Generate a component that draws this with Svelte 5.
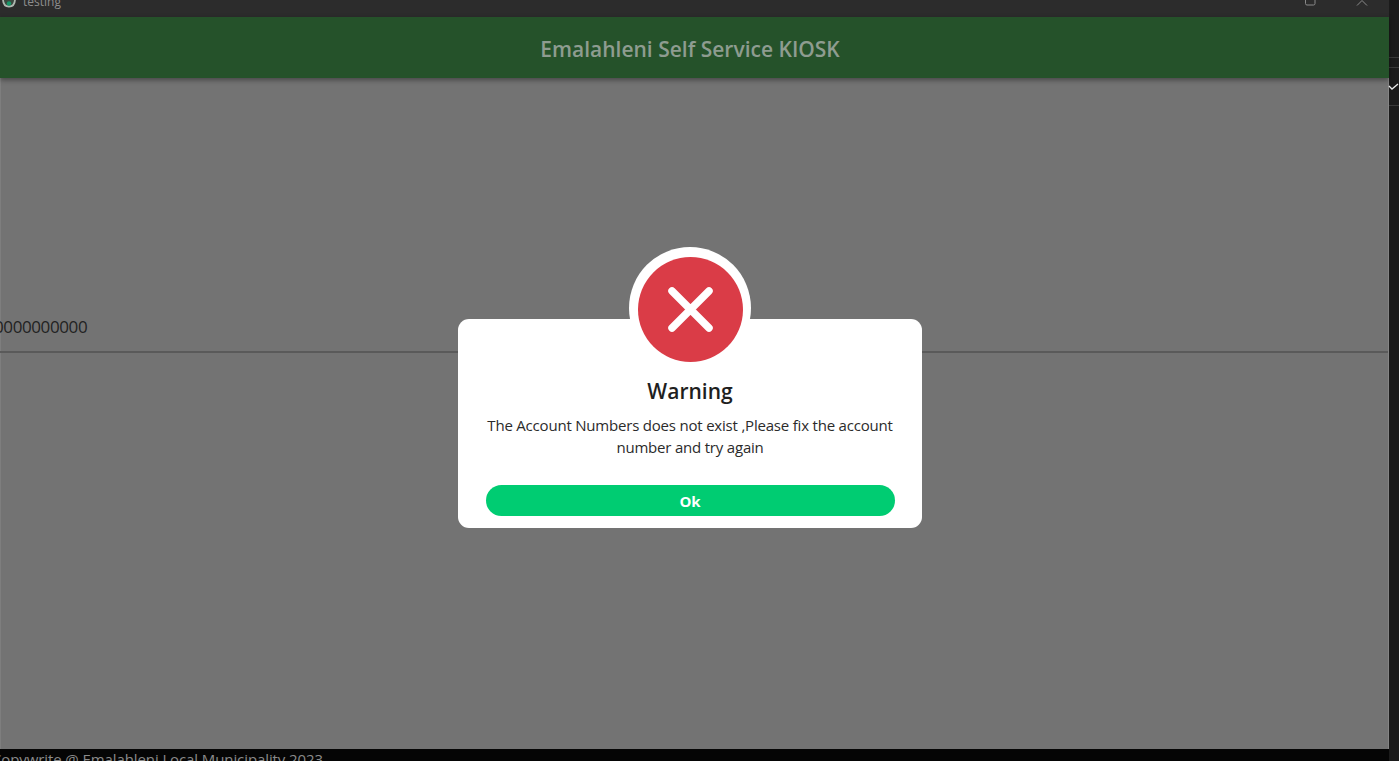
<script>
  const title = 'Emalahleni Self Service KIOSK';
  const message = 'The Account Numbers does not exist ,Please fix the account number and try again';
</script>

<div class="page">
  <div class="window">
    <div class="titlebar">
      <svg class="logo" viewBox="0 0 14 8" aria-hidden="true">
        <path d="M1-1c0 5 2.500 7.500 6 7.500S13 4 13-1" fill="#3c4a40" stroke="#aeb8b0" stroke-width="1.800" />
        <circle cx="7" cy="3.500" r="2.200" fill="#17996a" />
      </svg>
      <span class="app-name">testing</span>
      <div class="controls">
        <svg class="max" viewBox="0 0 12 6" aria-hidden="true"><rect x="1.500" y="-5" width="9.500" height="10" rx="1.500" fill="none" stroke="#8a8a8a" stroke-width="1" /></svg>
        <svg class="close" viewBox="0 0 12 6" aria-hidden="true"><path d="M6 0.500L1 5.500M6 0.500l5 5" fill="none" stroke="#8a8a8a" stroke-width="1" /></svg>
      </div>
    </div>
    <header class="header"><h1>{title}</h1></header>
    <main class="content">
      <div class="field">
        <span class="value">0000000000</span>
      </div>
    </main>
    <footer class="footer"><span>Copywrite @ Emalahleni Local Municipality 2023</span></footer>
  </div>
  <aside class="strip">
    <div class="strip-thin"></div>
    <div class="strip-row">
      <svg viewBox="0 0 11 7" aria-hidden="true"><path d="M1 3l3 3 6-5" fill="none" stroke="#e8e8e8" stroke-width="1.300" /></svg>
    </div>
  </aside>

  <div class="overlay">
    <div class="dialog" role="alertdialog">
      <div class="badge">
        <svg viewBox="0 0 105 105" aria-hidden="true">
          <circle cx="52.500" cy="52.500" r="52.500" fill="#da3c47" />
          <path d="M34 34l37 37M71 34L34 71" fill="none" stroke="#fff" stroke-width="7.500" stroke-linecap="round" />
        </svg>
      </div>
      <h2>Warning</h2>
      <p>{message}</p>
      <button type="button">Ok</button>
    </div>
  </div>
</div>

<style>
  :global(body) {
    margin: 0;
    background: #1b1b1b;
    font-family: "Open Sans", "Noto Sans", sans-serif;
  }
  .page {
    position: relative;
    display: flex;
    height: 761px;
    overflow: hidden;
  }
  .window {
    flex: 1;
    display: flex;
    flex-direction: column;
    min-width: 0;
  }
  .titlebar {
    height: 17px;
    flex: none;
    display: flex;
    align-items: flex-start;
    gap: 6px;
    padding-left: 2px;
    background: #2c2c2c;
    overflow: hidden;
  }
  .logo {
    width: 14px;
    height: 8px;
    flex: none;
  }
  .app-name {
    color: #8e8e8e;
    font-size: 12px;
    line-height: 12px;
    margin-top: -4px;
    margin-left: 1px;
  }
  .controls {
    margin-left: auto;
    display: flex;
    gap: 40px;
    padding-right: 21px;
  }
  .controls svg {
    width: 12px;
    height: 6px;
    display: block;
  }
  .header {
    height: 61px;
    flex: none;
    display: flex;
    align-items: center;
    justify-content: center;
    padding-right: 9px;
    background: #25522a;
    box-shadow: 0 2px 5px rgba(0, 0, 0, 0.4);
    z-index: 1;
  }
  h1 {
    margin: 2px 0 0;
    color: #8e9c90;
    font-size: 21px;
    font-weight: 600;
  }
  .content {
    flex: 1;
    background: #737373;
    padding-top: 235px;
    border-left: 1px solid #7e7e7e;
    border-right: 1px solid #858585;
  }
  .field {
    height: 40px;
    display: flex;
    border-bottom: 2px solid #5a5a5a;
    box-sizing: border-box;
    overflow: hidden;
    margin-left: -1px;
  }
  .value {
    margin-left: -6px;
    font-size: 17px;
    letter-spacing: -0.4px;
    line-height: 27px;
    color: #222;
    white-space: nowrap;
  }
  .footer {
    height: 12px;
    flex: none;
    background: #050505;
    color: #8a8a8a;
    font-size: 15px;
    letter-spacing: -0.1px;
    line-height: 20px;
    overflow: hidden;
    white-space: nowrap;
    box-sizing: border-box;
  }
  .footer span {
    display: block;
    margin-left: -8px;
  }
  .strip {
    width: 10px;
    flex: none;
    background: #1b1b1b;
    padding-top: 57px;
  }
  .strip-thin {
    height: 10px;
    border-top: 1px solid #3a3a3a;
    box-sizing: border-box;
  }
  .strip-row {
    height: 39px;
    box-sizing: border-box;
    border-top: 1px solid #3a3a3a;
    border-bottom: 1px solid #3a3a3a;
    padding-top: 15px;
  }
  .strip-row svg {
    width: 11px;
    height: 7px;
    display: block;
    margin-left: -1px;
  }
  .overlay {
    position: absolute;
    left: 0;
    top: 0;
    width: 1381px;
    height: 100%;
  }
  .dialog {
    position: absolute;
    left: 458px;
    top: 319px;
    width: 464px;
    height: 209px;
    box-sizing: border-box;
    background: #fff;
    border-radius: 11px;
    display: flex;
    flex-direction: column;
    align-items: center;
    padding: 0 27px;
  }
  .badge {
    margin-top: -72px;
    padding: 10px 8.500px 7px;
    background: #fff;
    border-radius: 50%;
    flex: none;
  }
  .badge svg {
    width: 105px;
    height: 105px;
    display: block;
  }
  h2 {
    margin: 7px 0 0;
    font-size: 21px;
    line-height: 30px;
    font-weight: 600;
    color: #1f1f1f;
  }
  p {
    margin: 9px -5px 0;
    font-size: 15px;
    letter-spacing: -0.2px;
    line-height: 21.500px;
    color: #2b2b2b;
    text-align: center;
  }
  button {
    margin-top: 27px;
    width: 409px;
    height: 31px;
    flex: none;
    border: 0;
    border-radius: 16px;
    background: #00cc72;
    color: #fff;
    font: 700 15px "Open Sans", "Noto Sans", sans-serif;
  }
</style>
